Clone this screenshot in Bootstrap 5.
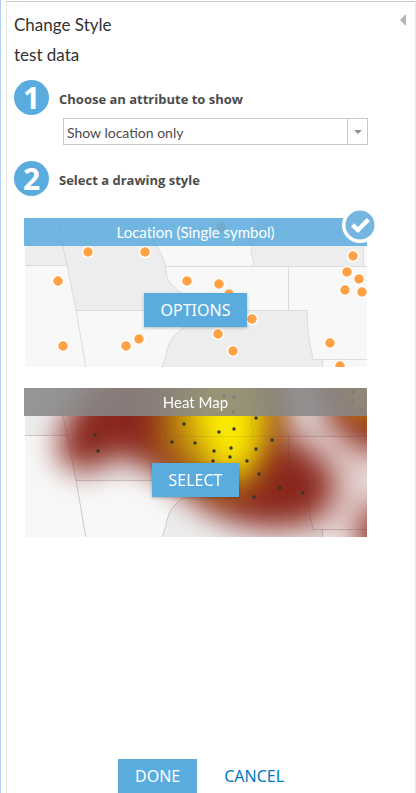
<!DOCTYPE html>
<html lang="en">
<head>
<meta charset="utf-8">
<meta name="viewport" content="width=device-width, initial-scale=1">
<title>Change Style</title>
<link href="https://cdn.jsdelivr.net/npm/bootstrap@5.3.0/dist/css/bootstrap.min.css" rel="stylesheet">
<style>
  body { font-family: Lato, "Open Sans", sans-serif; font-variant-ligatures: none; font-size: 14px; line-height: 20px; color: #4c4c4c; background: #fff; border-left: 1px solid #b3cdf0; }
  .style-pane { margin-left: 5px; border: 1px solid #e8e8e8; border-top-color: #c8c8c8; border-bottom: 0; margin-top: 1px; min-height: calc(100vh - 1px); padding: 12px 0 0 7px; }
  .pane-title { font-size: 17px; line-height: 22px; color: #323232; font-weight: 400; }
  .collapse-btn { padding: 0 9px 0 0; line-height: 0; }
  .step { gap: 10px; margin-top: 14px; }
  .step-number { width: 35px; height: 35px; background: #5bacde; color: #fff; font: 700 30px/35px "Open Sans", sans-serif; }
  .step-label { font: 700 13px/20px "Open Sans", sans-serif; padding-top: 2px; }
  .attribute-box { margin: 3px 47px 2px 49px; height: 27px; border: 1px solid #c8c8c8; }
  .attribute-box select { appearance: none; font-size: 14px; padding: 2px 3px 0; color: #4c4c4c; }
  .attribute-arrow { width: 20px; border-left: 1px solid #c8c8c8; pointer-events: none; }
  .style-list { margin: 22px 48px 0 10px; gap: 21px; }
  .style-title { background: rgba(91,172,222,.85); color: #fff; height: 28px; line-height: 28px; font-size: 15px; font-weight: 400; }
  .style-title.idle { background: rgba(136,136,136,.87); }
  .style-map { height: 149px; padding-left: 1px; }
  .style-check { top: -11px; right: -11px; }
  .action { border: 0; border-radius: 0; font: 400 16px/20px "Noto Sans", sans-serif; padding: 7px 17px; height: 34px; }
  .action.solid { background: #5bacde; color: #fff; box-shadow: 0 1px 3px rgba(0,0,0,.25); }
  .action.plain { color: #0079c1; }
  .pane-footer { padding-left: 104px; gap: 10px; }
</style>
<script src="https://cdn.jsdelivr.net/npm/bootstrap@5.3.0/dist/js/bootstrap.bundle.min.js"></script>
</head>
<body>
<main class="style-pane d-flex flex-column">
  <header class="d-flex justify-content-between align-items-start">
    <div>
      <h1 class="pane-title mb-0">Change Style</h1>
      <h2 class="pane-title mb-0 mt-2">test data</h2>
    </div>
    <button class="btn border-0 collapse-btn" type="button" aria-label="Collapse panel">
      <svg width="6" height="12" viewBox="0 0 6 12" aria-hidden="true"><path d="M6 0v12L0 6z" fill="#b4b4b4"/></svg>
    </button>
  </header>

  <div class="step d-flex align-items-center">
    <span class="step-number rounded-circle text-center flex-shrink-0">1</span>
    <label class="step-label" for="attribute">Choose an attribute to show</label>
  </div>
  <div class="attribute-box d-flex">
    <select id="attribute" class="border-0 bg-transparent flex-grow-1"><option>Show location only</option></select>
    <span class="attribute-arrow d-flex align-items-center justify-content-center">
      <svg width="8" height="4" viewBox="0 0 8 4" aria-hidden="true"><path d="M0 0h8L4 4z" fill="#919191"/></svg>
    </span>
  </div>

  <div class="step d-flex align-items-center">
    <span class="step-number rounded-circle text-center flex-shrink-0">2</span>
    <h3 class="step-label mb-0">Select a drawing style</h3>
  </div>

  <svg width="0" height="0" class="position-absolute" aria-hidden="true">
    <defs>
      <g id="basemap">
        <path d="M0 0H342V150H0z" fill="#f8f8f8"/>
        <g fill="#ededed" stroke="#dcdcdc">
          <path d="M-2 -2H33L38 28L42 47.500H-2z"/>
          <path d="M33 -2L38 28L42 47L51 92.500H160V78L156 75L145 65Q141 60 141 53Q141 43 132 28Q122 12 118 -2z"/>
          <path d="M232 -2Q234 12 230 22Q224 32 227 39Q230 42 227 48.500H338.500V-2z"/>
          <path d="M136 152Q141 139 142 132Q145 121 151 116Q158 111 160 106Q164 96 168 92.500H282.500Q281 110 288 141.500H297.500V152z"/>
          <g fill="none"><path d="M51 92L61 150M141 48.500H342M263.500 48V92M288 141.500H342"/></g>
        </g>
      </g>
      <filter id="soft" x="-50%" y="-50%" width="200%" height="200%" color-interpolation-filters="sRGB"><feGaussianBlur stdDeviation="15"/></filter>
    </defs>
  </svg>

  <section class="style-list d-flex flex-column">
    <article class="position-relative">
      <div class="overflow-hidden position-relative">
        <svg class="style-map d-block w-100" viewBox="0 0 342 149" preserveAspectRatio="xMidYMid slice" aria-hidden="true">
          <use href="#basemap"/>
          <g fill="#ffa245" stroke="#fff" stroke-width="1.500">
            <circle cx="63" cy="34" r="5.500"/><circle cx="120" cy="34" r="5.500"/><circle cx="33" cy="63" r="5.500"/><circle cx="162" cy="63" r="5.500"/><circle cx="38" cy="128" r="5.500"/><circle cx="101" cy="128" r="5.500"/><circle cx="114" cy="121" r="5.500"/><circle cx="196" cy="9" r="5.500"/><circle cx="194" cy="66" r="5.500"/><circle cx="204" cy="76" r="5.500"/><circle cx="227" cy="101" r="5.500"/><circle cx="193" cy="116" r="5.500"/><circle cx="208" cy="133" r="5.500"/><circle cx="328" cy="38" r="5.500"/><circle cx="322" cy="54" r="5.500"/><circle cx="334" cy="61" r="5.500"/><circle cx="320" cy="72" r="5.500"/><circle cx="337" cy="74" r="5.500"/><circle cx="305" cy="125" r="5.500"/><circle cx="315" cy="148" r="5.500"/>
          </g>
        </svg>
        <h4 class="style-title position-absolute top-0 start-0 w-100 text-center mb-0">Location (Single symbol)</h4>
        <div class="position-absolute bottom-0 start-0 w-100 text-center pb-4"><div class="pb-3"><button class="btn action solid" type="button">OPTIONS</button></div></div>
      </div>
      <svg class="style-check position-absolute" width="36" height="36" viewBox="0 0 36 36" role="img" aria-label="Selected">
        <circle cx="18" cy="18" r="18" fill="#fff"/><circle cx="18" cy="18" r="14.500" fill="#74b6e0"/>
        <path d="M10.500 18L16 23L26.500 12.500" fill="none" stroke="#fff" stroke-width="4.500"/>
      </svg>
    </article>

    <article class="position-relative overflow-hidden">
      <svg class="style-map d-block w-100" viewBox="0 0 342 149" preserveAspectRatio="xMidYMid slice" aria-hidden="true">
        <use href="#basemap"/>
        <g filter="url(#soft)">
          <path d="M30 66L46 20L86 -30H256L256 46L284 62Q314 80 308 108Q298 136 262 140Q206 142 172 114L130 82L96 68L56 86z" fill="#8a271c"/>
          <path d="M284 -30H385V62H335L304 30z" fill="#8a271c"/>
          <ellipse cx="358" cy="150" rx="26" ry="34" fill="#8a271c"/>
          <path d="M250 10L352 60V120L296 160L270 90z" fill="#8a271c" opacity=".2"/>
        </g>
        <g filter="url(#soft)">
          <path d="M134 -24H258L252 44L230 88L208 108L168 92L136 62z" fill="#b8800f"/>
          <path d="M170 -24H230L236 52L220 92L188 78L168 36z" fill="#fff000" opacity=".95"/>
          <ellipse cx="340" cy="3" rx="22" ry="26" fill="#e0b000"/>
        </g>
        <g fill="none" stroke="#404040" stroke-opacity=".1">
          <path d="M0 47.500H42M33 0L38 28L42 47L51 92L61 150M51 92.500H130M118 0Q122 12 132 28Q141 43 141 53Q141 60 145 65L156 75M136 152Q141 139 142 132Q145 121 151 116Q158 111 160 106M141 48.500H342M232 0Q234 12 230 22Q224 32 227 39Q230 42 227 48M263.500 48V92M338.500 0V48M217 92.500H282.500Q281 110 288 141.500H342M297.500 141V150"/>
        </g>
        <g fill="#333">
          <circle cx="70" cy="47" r="1.700"/><circle cx="73" cy="63" r="1.700"/><circle cx="159" cy="36" r="1.700"/><circle cx="147" cy="54" r="1.700"/><circle cx="170" cy="55" r="1.700"/><circle cx="199" cy="8" r="1.700"/><circle cx="209" cy="9" r="1.700"/><circle cx="208" cy="24" r="1.700"/><circle cx="231" cy="30" r="1.700"/><circle cx="209" cy="41" r="1.700"/><circle cx="194" cy="44" r="1.700"/><circle cx="247" cy="52" r="1.700"/><circle cx="206" cy="60" r="1.700"/><circle cx="189" cy="63" r="1.700"/><circle cx="231" cy="61" r="1.700"/><circle cx="205" cy="69" r="1.700"/><circle cx="188" cy="73" r="1.700"/><circle cx="222" cy="73" r="1.700"/><circle cx="234" cy="86" r="1.700"/><circle cx="255" cy="100" r="1.700"/><circle cx="278" cy="105" r="1.700"/><circle cx="229" cy="109" r="1.700"/><circle cx="328" cy="4" r="1.700"/><circle cx="327" cy="13" r="1.700"/><circle cx="336" cy="22" r="1.700"/>
        </g>
      </svg>
      <h4 class="style-title idle position-absolute top-0 start-0 w-100 text-center mb-0">Heat Map</h4>
      <div class="position-absolute bottom-0 start-0 w-100 text-center pb-4"><div class="pb-3"><button class="btn action solid" type="button">SELECT</button></div></div>
    </article>
  </section>

  <footer class="pane-footer d-flex mt-auto">
    <button class="btn action solid shadow-none" type="button">DONE</button>
    <button class="btn action plain" type="button">CANCEL</button>
  </footer>
</main>
</body>
</html>
